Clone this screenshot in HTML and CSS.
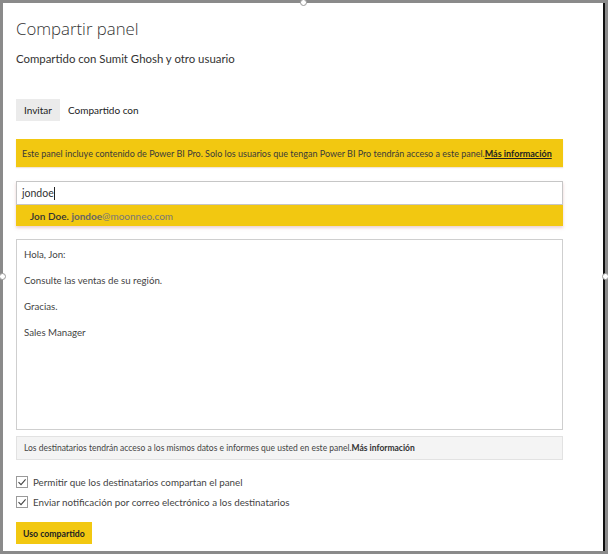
FILE: index.html
```html
<!DOCTYPE html>
<html lang="es">
<head>
<meta charset="utf-8">
<title>Compartir panel</title>
<link rel="stylesheet" href="styles.css">
</head>
<body>
<div class="dialog">
  <span class="handle handle-top"></span>
  <span class="handle handle-left"></span>
  <span class="handle handle-right"></span>
  <h1 class="title">Compartir panel</h1>
  <p class="subtitle">Compartido con Sumit Ghosh y otro usuario</p>
  <div class="tabs">
    <span class="tab tab-active">Invitar</span>
    <span class="tab">Compartido con</span>
  </div>
  <div class="banner"><span>Este panel incluye contenido de Power BI Pro. Solo los usuarios que tengan Power BI Pro tendrán acceso a este panel.<a class="banner-link">Más información</a></span></div>
  <div class="picker">
    <div class="input">jondoe<span class="caret"></span></div>
    <div class="suggestion"><span><span class="s-name">Jon Doe.</span> <span class="s-user">jondoe</span><span class="s-domain">@moonneo.com</span></span></div>
  </div>
  <div class="message">
    <p>Hola, Jon:</p>
    <p>Consulte las ventas de su región.</p>
    <p>Gracias.</p>
    <p>Sales Manager</p>
  </div>
  <div class="info"><span>Los destinatarios tendrán acceso a los mismos datos e informes que usted en este panel.<b>Más información</b></span></div>
  <label class="check"><span class="box"><svg viewBox="0 0 12 12" width="12" height="12"><path d="M2.5 6.2 L5 8.6 L9.6 3.4" fill="none" stroke="#444" stroke-width="1.1"/></svg></span>Permitir que los destinatarios compartan el panel</label>
  <label class="check"><span class="box"><svg viewBox="0 0 12 12" width="12" height="12"><path d="M2.5 6.2 L5 8.6 L9.6 3.4" fill="none" stroke="#444" stroke-width="1.1"/></svg></span>Enviar notificación por correo electrónico a los destinatarios</label>
  <button class="share">Uso compartido</button>
</div>
</body>
</html>
```
FILE: styles.css
```css
* { box-sizing: border-box; }
html, body { margin: 0; padding: 0; }
body {
  background: #8a8a8a;
  width: 608px;
  height: 554px;
  overflow: hidden;
  font-family: "Lato", "Open Sans", sans-serif;
  color: #333;
}
.dialog {
  position: relative;
  margin: 3px 0 0 3px;
  width: 602px;
  height: 548px;
  background: #fff;
  border-right: 2px solid #111;
  padding: 0 40px 0 13px;
}
.handle {
  position: absolute;
  width: 7px;
  height: 7px;
  border-radius: 50%;
  background: #fff;
  border: 1px solid #999;
}
.handle-top { top: -4px; left: 297px; }
.handle-left { top: 270px; left: -4px; }
.handle-right { top: 270px; right: -6px; }
.title {
  margin: 0;
  padding-top: 12px;
  font-family: "Open Sans", sans-serif;
  font-size: 16.8px;
  font-weight: 300;
  line-height: 27px;
  color: #333;
}
.subtitle {
  margin: 8px 0 0;
  font-size: 11.4px;
  line-height: 17px;
  color: #333;
}
.tabs {
  display: flex;
  margin-top: 32px;
  height: 22px;
}
.tab {
  display: flex;
  align-items: center;
  padding: 0 8px;
  font-size: 10px;
  color: #222;
}
.tab-active { background: #ebebeb; }
.banner {
  margin-top: 18px;
  background: #f2c811;
  height: 28px;
  display: flex;
  align-items: center;
  padding: 1px 6px 0;
  font-size: 9px;
  color: #3a3a3a;
  white-space: nowrap;
  box-shadow: 0 1px 1px rgba(200,150,100,0.25);
}
.banner-link {
  font-weight: 700;
  color: #222;
  text-decoration: underline;
}
.picker {
  margin-top: 14px;
  box-shadow: 0 2px 3px rgba(200,120,120,0.35);
}
.input {
  height: 24px;
  border: 1px solid #c6c6c6;
  display: flex;
  align-items: center;
  padding: 0 5px;
  font-size: 10.5px;
  color: #333;
}
.caret {
  display: inline-block;
  width: 1px;
  height: 13px;
  background: #222;
}
.suggestion {
  height: 21px;
  background: #f2c811;
  display: flex;
  align-items: center;
  padding-left: 14px;
  font-size: 10px;
  white-space: pre;
}
.s-name { color: #333; font-weight: 600; }
.s-user { color: #666; font-weight: 700; }
.s-domain { color: #777; }
.message {
  margin-top: 13px;
  height: 191px;
  border: 1px solid #cfcfcf;
  padding: 1px 7px;
  font-size: 9.7px;
  color: #444;
}
.message p {
  margin: 0;
  line-height: 26px;
}
.info {
  margin-top: 6px;
  height: 24px;
  background: #f4f4f4;
  border: 1px solid #e2e2e2;
  display: flex;
  align-items: center;
  padding: 0 7px;
  font-size: 8.5px;
  color: #444;
  white-space: nowrap;
}
.info b { color: #333; }
.check {
  display: flex;
  align-items: center;
  font-size: 9.8px;
  color: #444;
  height: 20px;
}
.check:first-of-type { margin-top: 12px; }
.box {
  width: 12px;
  height: 12px;
  border: 1px solid #9a9a9a;
  margin-right: 5px;
  display: flex;
}
.box svg { margin: -1px; }
.share {
  margin-top: 10px;
  background: #f2c811;
  border: 0;
  height: 22px;
  padding: 0 7px;
  font-family: inherit;
  font-size: 8.7px;
  font-weight: 700;
  color: #222;
}
```
